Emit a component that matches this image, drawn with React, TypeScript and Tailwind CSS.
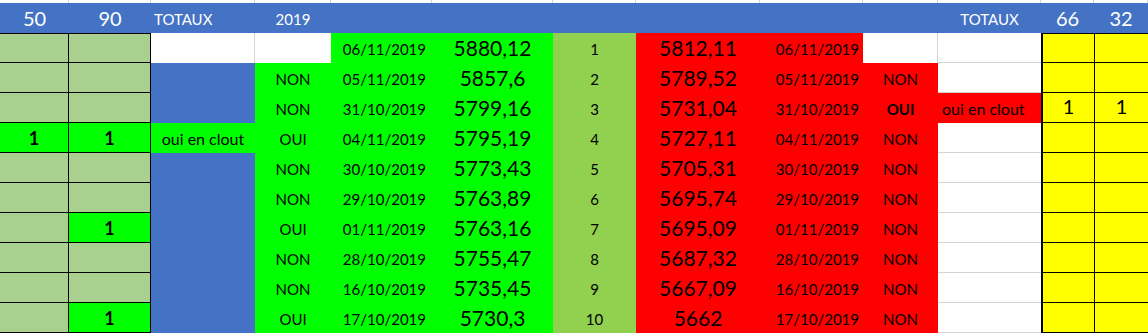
import React from 'react';

type Row = {
  a?: string;
  b?: string;
  c: 'white' | 'blue' | 'green';
  cText?: string;
  d?: string;
  dateL: string;
  valL: string;
  n: number;
  valR: string;
  dateR: string;
  j?: string;
  jBold?: boolean;
  k?: string;
  l?: string;
  m?: string;
};

const rows: Row[] = [
  { c: 'white', dateL: '06/11/2019', valL: '5880,12', n: 1, valR: '5812,11', dateR: '06/11/2019' },
  { c: 'blue', d: 'NON', dateL: '05/11/2019', valL: '5857,6', n: 2, valR: '5789,52', dateR: '05/11/2019', j: 'NON' },
  { c: 'blue', d: 'NON', dateL: '31/10/2019', valL: '5799,16', n: 3, valR: '5731,04', dateR: '31/10/2019', j: 'OUI', jBold: true, k: 'oui en clout', l: '1', m: '1' },
  { a: '1', b: '1', c: 'green', cText: 'oui en clout', d: 'OUI', dateL: '04/11/2019', valL: '5795,19', n: 4, valR: '5727,11', dateR: '04/11/2019', j: 'NON' },
  { c: 'blue', d: 'NON', dateL: '30/10/2019', valL: '5773,43', n: 5, valR: '5705,31', dateR: '30/10/2019', j: 'NON' },
  { c: 'blue', d: 'NON', dateL: '29/10/2019', valL: '5763,89', n: 6, valR: '5695,74', dateR: '29/10/2019', j: 'NON' },
  { b: '1', c: 'blue', d: 'OUI', dateL: '01/11/2019', valL: '5763,16', n: 7, valR: '5695,09', dateR: '01/11/2019', j: 'NON' },
  { c: 'blue', d: 'NON', dateL: '28/10/2019', valL: '5755,47', n: 8, valR: '5687,32', dateR: '28/10/2019', j: 'NON' },
  { c: 'blue', d: 'NON', dateL: '16/10/2019', valL: '5735,45', n: 9, valR: '5667,09', dateR: '16/10/2019', j: 'NON' },
  { b: '1', c: 'blue', d: 'OUI', dateL: '17/10/2019', valL: '5730,3', n: 10, valR: '5662', dateR: '17/10/2019', j: 'NON' },
];

const cols = 'grid-cols-[69px_82px_104px_76px_101px_121px_83px_124px_103px_75px_103px_53px_54px]';

function Cell({ className = '', children }: { className?: string; children?: React.ReactNode }) {
  return <div className={`flex items-end justify-center leading-none text-black ${className}`}>{children}</div>;
}

export default function App() {
  return (
    <div className="w-[1148px] h-[333px] overflow-hidden bg-white font-['Lato',sans-serif]">
      {/* column strip above header */}
      <div className={`grid ${cols} h-[3px]`}>
        {Array.from({ length: 13 }).map((_, i) => (
          <div key={i} className="border-r border-[#d4d4d4]" />
        ))}
      </div>

      {/* header */}
      <div className={`grid ${cols} h-[30px] bg-[#4472c4] text-white`}>
        <Cell className="text-[20px] !text-white pb-[5px]">50</Cell>
        <Cell className="text-[20px] !text-white pb-[5px]">90</Cell>
        <Cell className="text-[15px] !text-white pb-[6px] !justify-start pl-[3px]">TOTAUX</Cell>
        <Cell className="text-[15px] !text-white pb-[6px]">2019</Cell>
        <div />
        <div />
        <div />
        <div />
        <div />
        <div />
        <Cell className="text-[15px] !text-white pb-[6px]">TOTAUX</Cell>
        <Cell className="text-[20px] !text-white pb-[5px]">66</Cell>
        <Cell className="text-[20px] !text-white pb-[5px]">32</Cell>
      </div>

      {/* body */}
      {rows.map((r, i) => (
        <div key={i} className={`grid ${cols} h-[30px]`}>
          <Cell
            className={`border-b border-r border-black text-[18px] font-bold pb-[5px] ${i === 0 ? 'border-t' : ''} ${
              r.a ? 'bg-[#00ff00]' : 'bg-[#a9d08e]'
            }`}
          >
            {r.a}
          </Cell>
          <Cell
            className={`border-b border-r border-black text-[18px] font-bold pb-[5px] ${i === 0 ? 'border-t' : ''} ${
              r.b ? 'bg-[#00ff00]' : 'bg-[#a9d08e]'
            }`}
          >
            {r.b}
          </Cell>
          <Cell
            className={`text-[16px] pb-[6px] ${
              r.c === 'white'
                ? 'bg-white border-r border-[#d4d4d4]'
                : r.c === 'blue'
                ? 'bg-[#4472c4]'
                : 'bg-[#00ff00]'
            }`}
          >
            {r.cText}
          </Cell>
          <Cell className={`text-[15px] pb-[6px] ${r.d ? 'bg-[#00ff00]' : 'bg-white'}`}>{r.d}</Cell>
          <Cell className="bg-[#00ff00] text-[15px] pb-[6px] !justify-end pr-[6px]">{r.dateL}</Cell>
          <Cell className="bg-[#00ff00] text-[21px] pb-[5px]">{r.valL}</Cell>
          <Cell className="bg-[#92d050] text-[15px] pb-[6px]">{r.n}</Cell>
          <Cell className="bg-[#ff0000] text-[21px] pb-[5px]">{r.valR}</Cell>
          <Cell className="bg-[#ff0000] text-[15px] pb-[6px] !justify-end pr-[4px]">{r.dateR}</Cell>
          <Cell
            className={`text-[15px] pb-[6px] ${r.jBold ? 'font-bold' : ''} ${
              r.j ? 'bg-[#ff0000]' : 'bg-white border-r border-[#d4d4d4]'
            }`}
          >
            {r.j}
          </Cell>
          <Cell
            className={`text-[16px] pb-[6px] !justify-start pl-[4px] ${
              r.k ? 'bg-[#ff0000]' : 'bg-white border-b border-[#d4d4d4]'
            }`}
          >
            {r.k}
          </Cell>
          <Cell
            className={`bg-[#ffff00] border-l-2 border-b border-black text-[20px] pb-[6px] ${i === 0 ? 'border-t' : ''}`}
          >
            {r.l}
          </Cell>
          <Cell
            className={`bg-[#ffff00] border-l border-b border-black text-[20px] pb-[6px] ${i === 0 ? 'border-t' : ''}`}
          >
            {r.m}
          </Cell>
        </div>
      ))}
    </div>
  );
}
